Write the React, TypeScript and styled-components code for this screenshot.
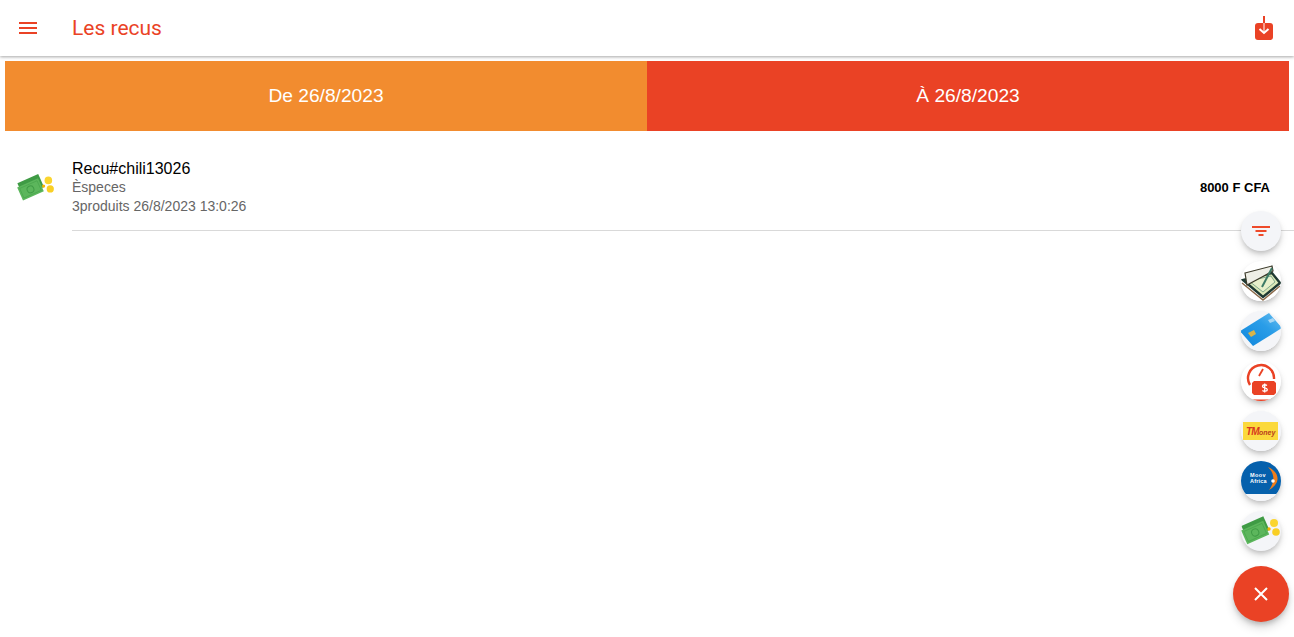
import React from "react";
import styled, { createGlobalStyle } from "styled-components";

const GlobalStyle = createGlobalStyle`
  html, body {
    margin: 0;
    padding: 0;
    height: 100%;
    background: #fff;
    font-family: "Liberation Sans", Arial, sans-serif;
    overflow: hidden;
  }
`;

const Page = styled.div`
  position: relative;
  width: 100%;
  height: 637px;
  overflow: hidden;
`;

const Toolbar = styled.header`
  height: 56px;
  display: flex;
  align-items: center;
  padding: 0 18px;
  background: #fff;
  box-shadow: 0 1px 3px rgba(0, 0, 0, 0.35);
`;

const MenuIcon = styled.span`
  display: flex;
  margin-left: 1px;
`;

const Title = styled.h1`
  margin: 0 0 0 35px;
  flex: 1;
  font: 400 21px "Roboto", sans-serif;
  color: #ea4225;
`;

const IconSlot = styled.span`
  display: flex;
  margin-right: 2px;
`;

const Range = styled.div`
  display: flex;
  height: 70px;
  margin: 5px 5px 0;
`;

const RangeButton = styled.div<{ $bg: string }>`
  flex: 1;
  display: flex;
  align-items: center;
  justify-content: center;
  background: ${(p) => p.$bg};
  color: #fff;
  font-size: 19.2px;
`;

const Receipt = styled.div`
  display: flex;
  align-items: stretch;
  margin-top: 18px;
  padding-left: 17px;
`;

const ReceiptIcon = styled.div`
  width: 55px;
  padding-top: 20px;
  flex: none;
`;

const ReceiptBody = styled.div`
  flex: 1;
  display: flex;
  align-items: center;
  justify-content: space-between;
  height: 81px;
  padding-right: 24px;
  border-bottom: 1px solid #d9d9d9;
`;

const Lines = styled.div`
  display: flex;
  flex-direction: column;
  margin-top: -5px;
`;

const Name = styled.div`
  font-size: 16px;
  line-height: 19px;
  color: #000;
`;

const Sub = styled.div`
  font-size: 14px;
  line-height: 18.5px;
  color: #666;
`;

const Amount = styled.div`
  font-size: 13px;
  font-weight: 700;
  color: #000;
  margin-top: -5px;
`;

const FabList = styled.div`
  position: absolute;
  top: 211px;
  right: 5px;
  width: 56px;
  display: flex;
  flex-direction: column;
  align-items: center;
  gap: 10px;
`;

const MiniFab = styled.div`
  width: 40px;
  height: 40px;
  border-radius: 50%;
  overflow: hidden;
  display: flex;
  align-items: center;
  justify-content: center;
  background: #f4f5f8;
  box-shadow: 0 3px 5px -1px rgba(0, 0, 0, 0.2), 0 5px 8px rgba(0, 0, 0, 0.1);
`;

const MainFab = styled.div`
  width: 56px;
  height: 56px;
  margin-top: 5px;
  border-radius: 50%;
  display: flex;
  align-items: center;
  justify-content: center;
  background: #ea4225;
  box-shadow: 0 3px 5px -1px rgba(0, 0, 0, 0.2), 0 6px 10px rgba(0, 0, 0, 0.14);
`;

const Cash = ({ size = 40 }: { size?: number }) => (
  <svg width={size} height={size} viewBox="0 0 40 40">
    <g transform="rotate(-24 14 21)">
      <rect x="4" y="10" width="24" height="15" fill="#3f9b45" />
      <rect x="2" y="14" width="24" height="15" fill="#5cb65c" />
      <rect x="4" y="16" width="20" height="11" fill="none" stroke="#48a44c" strokeWidth="0.7" />
      <circle cx="14" cy="21.500" r="3.600" fill="none" stroke="#3f9b45" strokeWidth="1" />
    </g>
    <circle cx="33" cy="12" r="4" fill="#fbd52f" />
    <circle cx="35" cy="21" r="3.800" fill="#f9cf25" />
    <circle cx="28" cy="18" r="1.700" fill="#f4b400" />
  </svg>
);

const Checkbook = () => (
  <svg width="40" height="40" viewBox="0 0 40 40">
    <rect width="40" height="40" fill="#fff" />
    <path d="M2 19 L22 36 L39 22 L31 12 Z" fill="#dbe8b8" stroke="#1f3a33" strokeWidth="2.400" />
    <path d="M8 20 L30 15 L34 21 L22 31 Z" fill="#e8f0cb" stroke="#6a9880" strokeWidth="0.800" />
    <path d="M4 12 L31 5 L32 10 L21 16 L6 24 Z" fill="#eeeee6" stroke="#3c3a2a" strokeWidth="1.200" />
    <path d="M21 26 L31 7" stroke="#3d7a66" strokeWidth="2" />
    <path d="M1 22 L22 39 L39 25" fill="none" stroke="#8a6a4a" strokeWidth="1.400" />
  </svg>
);

const Card = () => (
  <svg width="40" height="40" viewBox="0 0 40 40">
    <defs>
      <linearGradient id="cardBlue" x1="0" y1="1" x2="1" y2="0">
        <stop offset="0" stopColor="#0f86dc" />
        <stop offset="0.6" stopColor="#2a9de8" />
        <stop offset="1" stopColor="#6cc0f0" />
      </linearGradient>
    </defs>
    <rect width="40" height="40" fill="#f4f5f8" />
    <path d="M28 2 L41 17 L12 35 L-1 20 Z" fill="url(#cardBlue)" />
    <path d="M7 22 L13 19 L15 23 L10 26 Z" fill="#d9b44a" />
    <path d="M27 9 L32 7 L34 10 L29 12 Z" fill="#a8d8f5" />
  </svg>
);

const Credit = () => (
  <svg width="40" height="40" viewBox="0 0 40 40">
    <rect width="40" height="40" fill="#fff" />
    <path d="M9 24 A13 13 0 1 1 33 18" fill="none" stroke="#ea4225" strokeWidth="2.400" />
    <path d="M18 15 L22 8" stroke="#ea4225" strokeWidth="1.800" />
    <path d="M13 20 H33 L35 22 V32 L33 34 H13 L11 32 V22 Z" fill="#ea4225" />
    <path d="M26 24.500c-1.500-1.200-4.500-1-4.500.7 0 2.300 4.800 1.100 4.800 3.500 0 1.800-3.200 2-4.900.7M23.700 22.500v9" fill="none" stroke="#fff" strokeWidth="1.300" />
    <rect x="12" y="38.500" width="26" height="2" fill="#ea4225" />
  </svg>
);

const TMoney = () => (
  <svg width="40" height="40" viewBox="0 0 40 40">
    <rect width="40" height="40" fill="#f4f5f8" />
    <rect x="2" y="11" width="35" height="18" fill="#fbd93c" />
    <text x="5" y="24" fontFamily="Liberation Sans, sans-serif" fontSize="10" fontWeight="700" fontStyle="italic" fill="#d8391f" letterSpacing="-0.8">
      TM
    </text>
    <text x="18" y="24" fontFamily="Liberation Sans, sans-serif" fontSize="7" fontWeight="700" fontStyle="italic" fill="#b8401c">
      oney
    </text>
  </svg>
);

const MoovAfrica = () => (
  <svg width="40" height="40" viewBox="0 0 40 40">
    <rect width="40" height="40" fill="#f4f5f8" />
    <rect y="0" width="40" height="33" fill="#0560ac" />
    <path d="M27 6 C38 11 41 21 28 29 C34 21 34 13 27 6 Z" fill="#f07d1a" />
    <circle cx="32" cy="20" r="1.800" fill="#fff" />
    <text x="9" y="16" fontFamily="Liberation Sans, sans-serif" fontSize="5.500" fontWeight="700" fill="#fff" letterSpacing="0.400">Moov</text>
    <text x="9" y="22" fontFamily="Liberation Sans, sans-serif" fontSize="5.500" fontWeight="700" fill="#fff" letterSpacing="0.200">Africa</text>
  </svg>
);

const App = () => {
  return (
    <Page>
      <GlobalStyle />
      <Toolbar>
        <MenuIcon>
          <svg width="18" height="12" viewBox="0 0 18 12" fill="#ea4225">
            <rect y="0" width="18" height="2" />
            <rect y="5" width="18" height="2" />
            <rect y="10" width="18" height="2" />
          </svg>
        </MenuIcon>
        <Title>Les recus</Title>
        <IconSlot>
          <svg width="20" height="24" viewBox="0 0 20 24">
            <rect x="1" y="7" width="18" height="17" rx="3" fill="#ea4225" />
            <path d="M10 0v16" stroke="#ea4225" strokeWidth="2" />
            <path d="M10 7v9" stroke="#f8a08e" strokeWidth="2" />
            <path d="M5.500 13l4.500 4 4.500-4" fill="none" stroke="#fff" strokeWidth="2" />
          </svg>
        </IconSlot>
      </Toolbar>
      <Range>
        <RangeButton $bg="#f28c2f">De 26/8/2023</RangeButton>
        <RangeButton $bg="#ea4225">À 26/8/2023</RangeButton>
      </Range>
      <Receipt>
        <ReceiptIcon>
          <Cash size={38} />
        </ReceiptIcon>
        <ReceiptBody>
          <Lines>
            <Name>Recu#chili13026</Name>
            <Sub>Èspeces</Sub>
            <Sub>3produits 26/8/2023 13:0:26</Sub>
          </Lines>
          <Amount>8000 F CFA</Amount>
        </ReceiptBody>
      </Receipt>
      <FabList>
        <MiniFab>
          <svg width="18" height="10" viewBox="0 0 18 10" fill="#ee4a2a">
            <rect y="0" width="18" height="2" />
            <rect x="3.500" y="4" width="11" height="2" />
            <rect x="6.500" y="8" width="5" height="2" />
          </svg>
        </MiniFab>
        <MiniFab><Checkbook /></MiniFab>
        <MiniFab><Card /></MiniFab>
        <MiniFab><Credit /></MiniFab>
        <MiniFab><TMoney /></MiniFab>
        <MiniFab><MoovAfrica /></MiniFab>
        <MiniFab><Cash /></MiniFab>
        <MainFab>
          <svg width="14" height="14" viewBox="0 0 14 14">
            <path d="M1 1l12 12M13 1L1 13" stroke="#fff" strokeWidth="2" />
          </svg>
        </MainFab>
      </FabList>
    </Page>
  );
};

export default App;
